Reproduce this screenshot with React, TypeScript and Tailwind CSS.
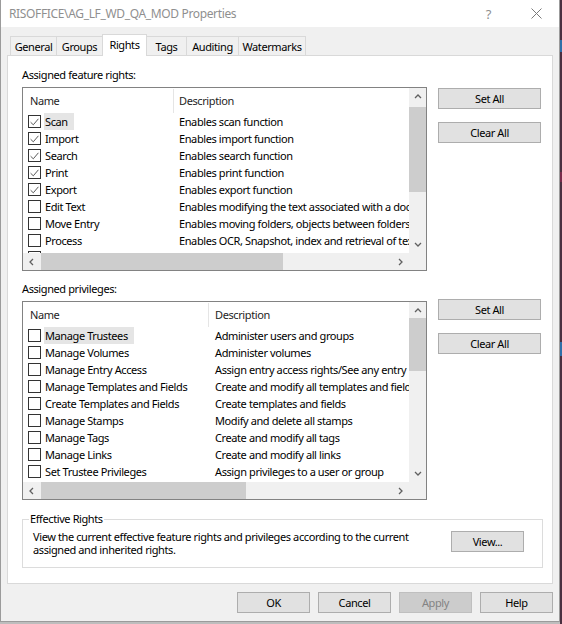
import React from "react";

type Row = { name: string; desc: string; checked?: boolean; active?: boolean };

const featureRows: Row[] = [
  { name: "Scan", desc: "Enables scan function", checked: true, active: true },
  { name: "Import", desc: "Enables import function", checked: true },
  { name: "Search", desc: "Enables search function", checked: true },
  { name: "Print", desc: "Enables print function", checked: true },
  { name: "Export", desc: "Enables export function", checked: true },
  { name: "Edit Text", desc: "Enables modifying the text associated with a document" },
  { name: "Move Entry", desc: "Enables moving folders, objects between folders" },
  { name: "Process", desc: "Enables OCR, Snapshot, index and retrieval of text" },
  { name: "", desc: "" },
];

const privilegeRows: Row[] = [
  { name: "Manage Trustees", desc: "Administer users and groups", active: true },
  { name: "Manage Volumes", desc: "Administer volumes" },
  { name: "Manage Entry Access", desc: "Assign entry access rights/See any entry" },
  { name: "Manage Templates and Fields", desc: "Create and modify all templates and fields" },
  { name: "Create Templates and Fields", desc: "Create templates and fields" },
  { name: "Manage Stamps", desc: "Modify and delete all stamps" },
  { name: "Manage Tags", desc: "Create and modify all tags" },
  { name: "Manage Links", desc: "Create and modify all links" },
  { name: "Set Trustee Privileges", desc: "Assign privileges to a user or group" },
];

const tabs = [
  { label: "General", w: "w-[47px]" },
  { label: "Groups", w: "w-[47px]" },
  { label: "Rights", w: "w-[45px]", selected: true },
  { label: "Tags", w: "w-[41px]" },
  { label: "Auditing", w: "w-[53px]" },
  { label: "Watermarks", w: "w-[68px]" },
];

function Checkbox({ checked }: { checked?: boolean }) {
  return (
    <span className="flex h-[13px] w-[13px] shrink-0 items-center justify-center border border-[#333333] bg-white">
      {checked && (
        <svg width="9" height="8" viewBox="0 0 9 8">
          <path d="M0.6 4.2 L3.3 6.8 L8.4 0.8" fill="none" stroke="#5a5a5a" strokeWidth="1" />
        </svg>
      )}
    </span>
  );
}

function Chevron({ dir }: { dir: "up" | "down" | "left" | "right" }) {
  const paths = {
    up: "M1 5 L4 2 L7 5",
    down: "M1 2 L4 5 L7 2",
    left: "M5 1 L2 4 L5 7",
    right: "M2 1 L5 4 L2 7",
  };
  return (
    <svg width="8" height="8" viewBox="0 0 8 8">
      <path d={paths[dir]} fill="none" stroke="#606060" strokeWidth="1.3" />
    </svg>
  );
}

function Button({ children, className = "", disabled }: { children: React.ReactNode; className?: string; disabled?: boolean }) {
  return (
    <div
      className={
        "flex h-[21px] items-center justify-center border " +
        (disabled ? "border-[#bfbfbf] bg-[#cccccc] text-[#838383] " : "border-[#adadad] bg-[#e1e1e1] text-black ") +
        className
      }
    >
      {children}
    </div>
  );
}

type ListProps = {
  rows: Row[];
  nameW: string;
  headW: string;
  headDescPad: string;
  contentH: string;
  vThumbTop: string;
  vThumbH: string;
  hThumbW: string;
};

function ListView({ rows, nameW, headW, headDescPad, contentH, vThumbTop, vThumbH, hThumbW }: ListProps) {
  return (
    <div className="flex w-[405px] flex-col border border-[#828282] bg-white">
      <div className={"flex " + contentH}>
        <div className="w-[386px] overflow-hidden">
          <div className="flex h-[25px] items-center whitespace-nowrap text-[#1e1e1e]">
            <div className={"pl-[7px] " + headW}>Name</div>
            <div className="h-[24px] w-px bg-[#e5e5e5]" />
            <div className={headDescPad}>Description</div>
          </div>
          {rows.map((r, i) => (
            <div key={i} className="flex h-[17px] items-center whitespace-nowrap">
              <div className="w-[5px] shrink-0" />
              <Checkbox checked={r.checked} />
              <div className={"flex h-[17px] shrink-0 items-center pl-[3px] " + nameW}>
                <span className={"flex h-[17px] items-center pl-[1px] pr-[6px] " + (r.active ? "bg-[#e5e5e5]" : "")}>
                  {r.name}
                </span>
              </div>
              <div>{r.desc}</div>
            </div>
          ))}
        </div>
        <div className="flex w-[17px] flex-col items-center bg-[#f0f0f0]">
          <div className="flex h-[17px] items-center">
            <Chevron dir="up" />
          </div>
          <div className={"w-[17px] bg-[#cdcdcd] " + vThumbTop + " " + vThumbH} />
          <div className="flex-1" />
          <div className="flex h-[17px] items-center">
            <Chevron dir="down" />
          </div>
        </div>
      </div>
      <div className="flex h-[17px]">
        <div className="flex w-[386px] bg-[#f0f0f0]">
          <div className="flex w-[17px] items-center justify-center">
            <Chevron dir="left" />
          </div>
          <div className={"ml-[1px] h-[17px] bg-[#cdcdcd] " + hThumbW} />
          <div className="flex-1" />
          <div className="flex w-[17px] items-center justify-center">
            <Chevron dir="right" />
          </div>
        </div>
        <div className="w-[17px] bg-[#f0f0f0]" />
      </div>
    </div>
  );
}

export default function App() {
  return (
    <div className="flex h-[624px] w-[562px] bg-[#bdbdbd] font-['Segoe_UI','Noto_Sans',sans-serif] text-[11px] leading-[14px] tracking-[-0.4px] text-black">
      <div className="flex h-[622px] w-[560px] flex-col border-x border-b border-[#9b9b9b] bg-[#f0f0f0]">
        {/* title bar */}
        <div className="flex h-[27px] items-center bg-white pl-[8px] text-[12px] tracking-[-0.35px] text-[#8f8f8f]">
          <span>RISOFFICE\AG_LF_WD_QA_MOD Properties</span>
          <span className="ml-auto mr-[40px] text-[13px]">?</span>
          <svg width="11" height="11" viewBox="0 0 11 11" className="mr-[17px]">
            <path d="M0.5 0.5 L10.5 10.5 M10.5 0.5 L0.5 10.5" stroke="#7a7a7a" strokeWidth="1" />
          </svg>
        </div>

        <div className="flex flex-col pl-[6px] pt-[7px]">
          {/* tabs */}
          <div className="flex h-[21px] items-end pl-[3px]">
            {tabs.map((t, i) =>
              t.selected ? (
                <div
                  key={t.label}
                  className={"relative z-10 -mb-px -ml-px flex h-[22px] items-start justify-center border-x border-t border-[#d9d9d9] bg-white pt-[3px] " + t.w}
                >
                  {t.label}
                </div>
              ) : (
                <div
                  key={t.label}
                  className={"flex h-[19px] items-center justify-center border-x border-t border-[#d9d9d9] bg-[#f0f0f0] pt-[1px] " + (i > 0 ? "-ml-px " : "") + t.w}
                >
                  {t.label}
                </div>
              )
            )}
          </div>

          {/* panel */}
          <div className="flex h-[529px] w-[546px] flex-col border border-[#d9d9d9] bg-white pl-[14px]">
            <div className="mt-[12px] h-[14px]">Assigned feature rights:</div>
            <div className="mt-[5px] flex items-start">
              <ListView
                rows={featureRows}
                nameW="w-[138px]"
                headW="w-[150px]"
                headDescPad="pl-[5px]"
                contentH="h-[165px]"
                vThumbTop="mt-[2px]"
                vThumbH="h-[85px]"
                hThumbW="w-[242px]"
              />
              <div className="ml-[11px] mt-[1px] flex w-[103px] flex-col gap-[13px]">
                <Button>Set All</Button>
                <Button>Clear All</Button>
              </div>
            </div>

            <div className="mt-[11px] h-[14px]">Assigned privileges:</div>
            <div className="mt-[3px] flex items-start">
              <div className="mt-[2px]">
                <ListView
                  rows={privilegeRows}
                  nameW="w-[174px]"
                  headW="w-[185px]"
                  headDescPad="pl-[6px]"
                  contentH="h-[180px]"
                  vThumbTop="mt-[-1px]"
                  vThumbH="h-[53px]"
                  hThumbW="w-[205px]"
                />
              </div>
              <div className="ml-[11px] flex w-[103px] flex-col gap-[13px]">
                <Button>Set All</Button>
                <Button>Clear All</Button>
              </div>
            </div>

            {/* effective rights group */}
            <div className="relative mt-[19px] flex h-[49px] w-[521px] items-start border border-[#dcdcdc]">
              <span className="absolute -top-[8px] left-[6px] bg-white px-[1px]">Effective Rights</span>
              <div className="whitespace-nowrap pl-[10px] pt-[10px] leading-[13px]">
                <div>View the current effective feature rights and privileges according to the current</div>
                <div>assigned and inherited rights.</div>
              </div>
              <Button className="ml-auto mr-[18px] mt-[11px] w-[73px] shrink-0">View...</Button>
            </div>
          </div>
        </div>

        {/* bottom buttons */}
        <div className="mt-[8px] flex justify-end gap-[8px] pr-[6px]">
          <Button className="w-[73px]">OK</Button>
          <Button className="w-[73px]">Cancel</Button>
          <Button className="w-[73px]" disabled>
            Apply
          </Button>
          <Button className="w-[73px]">Help</Button>
        </div>
      </div>
      <div className="flex h-[624px] w-[2px] flex-col bg-[#4a2f40]">
        <div className="mt-[40px] h-[12px] bg-[#2f6fa8]" />
        <div className="mt-[120px] h-[10px] bg-[#7a2a4a]" />
        <div className="mt-[160px] h-[14px] bg-[#2f6fa8]" />
      </div>
    </div>
  );
}
